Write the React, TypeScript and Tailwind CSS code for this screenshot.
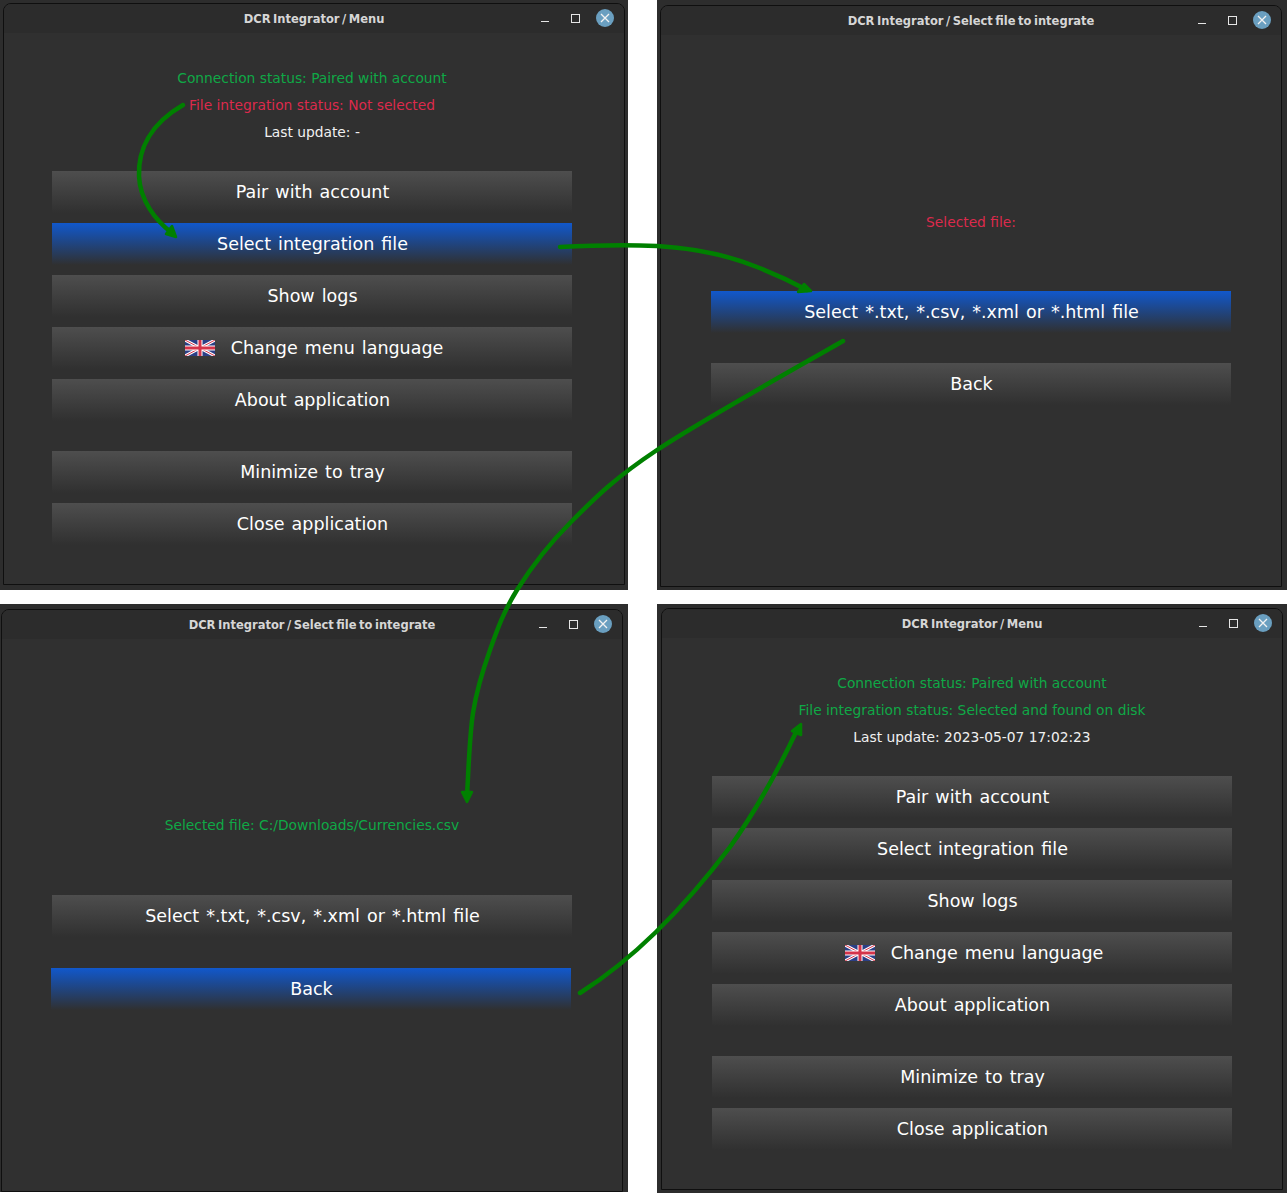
import type { ReactNode } from 'react'

const font = { fontFamily: '"DejaVu Sans", sans-serif' }

function Flag() {
  return (
    <svg width="30" height="16" viewBox="0 0 60 32" className="shrink-0">
      <rect width="60" height="32" fill="#2b3f86" />
      <path d="M0 0L60 32M60 0L0 32" stroke="#fff" strokeWidth="6" />
      <path d="M0 0L60 32M60 0L0 32" stroke="#d5344a" strokeWidth="2" />
      <path d="M30 0V32M0 16H60" stroke="#fff" strokeWidth="10" />
      <path d="M30 0V32M0 16H60" stroke="#d5344a" strokeWidth="6" />
    </svg>
  )
}

function MenuButton({ label, active, flag, extra }: { label: string; active?: boolean; flag?: boolean; extra?: string }) {
  return (
    <div
      className={`flex h-[42px] w-[520px] shrink-0 items-center justify-center gap-[16px] text-[17.5px] text-white [word-spacing:1.5px] ${
        flag ? 'pl-[4px]' : 'pl-[1px]'
      } ${active ? 'bg-linear-to-b/srgb from-[#1158cc] to-[#303030]' : 'bg-linear-to-b/srgb from-[#4e4e4e] to-[#303030]'} ${extra ?? ''}`}
    >
      {flag && <Flag />}
      <span>{label}</span>
    </div>
  )
}

function Window({
  title,
  outer,
  inner,
  children,
}: {
  title: string
  outer: string
  inner: string
  children: ReactNode
}) {
  return (
    <div className={`bg-[#2d2d2d] ${outer}`}>
      <div className={`flex flex-col overflow-hidden rounded-t-[8px] border border-[#0f0f0f] bg-[#303030] ${inner}`}>
        <div className="relative flex h-[29px] shrink-0 items-center justify-center bg-[#2c2c2c] pt-[2px]">
          <span className="text-[11.5px] font-bold text-[#d6d6d6] [word-spacing:-1.5px]">{title}</span>
          <div className="absolute right-[10px] top-[5px] flex items-center">
            <div className="mt-[6px] h-[1px] w-[8px] bg-[#e6e6e6]" />
            <div className="ml-[22px] h-[9px] w-[9px] border border-[#e6e6e6]" />
            <div className="ml-[16px] flex h-[18px] w-[18px] items-center justify-center rounded-full bg-[#6a9fc0]">
              <svg width="10" height="10" viewBox="0 0 10 10">
                <path d="M1 1L9 9M9 1L1 9" stroke="#f2f2f2" strokeWidth="1.3" />
              </svg>
            </div>
          </div>
        </div>
        {children}
      </div>
    </div>
  )
}

function StatusLine({ text, color }: { text: string; color: string }) {
  return <div className={`h-[27px] w-[520px] text-center text-[13.8px] leading-[27px] ${color}`}>{text}</div>
}

function MenuBody({
  fileStatus,
  fileColor,
  lastUpdate,
  selected,
  pad,
}: {
  fileStatus: string
  fileColor: string
  lastUpdate: string
  selected?: boolean
  pad: string
}) {
  return (
    <div className={`flex flex-col pt-[32px] ${pad}`}>
      <StatusLine text="Connection status: Paired with account" color="text-[#0fa846]" />
      <StatusLine text={fileStatus} color={fileColor} />
      <StatusLine text={lastUpdate} color="text-[#f0f0f0]" />
      <div className="mt-[25px] flex flex-col gap-[10px]">
        <MenuButton label="Pair with account" />
        <MenuButton label="Select integration file" active={selected} />
        <MenuButton label="Show logs" />
        <MenuButton label="Change menu language" flag />
        <MenuButton label="About application" />
        <MenuButton label="Minimize to tray" extra="mt-[20px]" />
        <MenuButton label="Close application" />
      </div>
    </div>
  )
}

function Arrows() {
  const green = '#008000'
  return (
    <svg className="pointer-events-none absolute left-0 top-0" width="1287" height="1193" fill="none">
      <g stroke={green} strokeWidth="4.5" strokeLinecap="round">
        <path d="M183 105C150 124 138 150 139 176C140 200 155 220 172 233" />
        <path d="M560 247C600 245 630 245 657 246C690 248 725 254 757 267C775 274 792 282 807 290" />
        <path d="M843 341C812 359 702.5 419.7 657 450C611.5 480.3 593.3 499.7 570 523C546.7 546.3 530.3 568.8 517 590C503.7 611.2 497.3 629.5 490 650C482.7 670.5 476.8 688.5 473 713C469.2 737.5 468 783 467 795" />
        <path d="M580 993C640 955 690 900 730 847C760 805 782 762 798 728" />
      </g>
      <g fill={green} stroke={green} strokeWidth="2.5" strokeLinejoin="round">
        <path d="M176 237L166 234L172 226Z" />
        <path d="M811 291L798 292L804 284Z" />
        <path d="M467 802L462 792L472 792Z" />
        <path d="M801 724L801 735L792 731Z" />
      </g>
    </svg>
  )
}

export default function App() {
  return (
    <div className="relative flex h-[1193px] w-[1287px] flex-col justify-between overflow-hidden bg-white" style={font}>
      <div className="flex justify-between">
        <Window title="DCR Integrator / Menu" outer="h-[590px] w-[628px] pl-[3px] pt-[3px]" inner="h-[582px] w-[622px]">
          <MenuBody
            pad="pl-[48px]"
            fileStatus="File integration status: Not selected"
            fileColor="text-[#dc2a4c]"
            lastUpdate="Last update: -"
            selected
          />
        </Window>
        <Window
          title="DCR Integrator / Select file to integrate"
          outer="h-[590px] w-[630px] pl-[3px] pt-[5px]"
          inner="h-[582px] w-[622px]"
        >
          <div className="flex flex-col pl-[50px] pt-[174px]">
            <div className="h-[27px] w-[520px] text-center text-[13.8px] leading-[27px] text-[#dc2a4c]">Selected file:</div>
            <MenuButton label="Select *.txt, *.csv, *.xml or *.html file" active extra="mt-[55px]" />
            <MenuButton label="Back" extra="mt-[30px]" />
          </div>
        </Window>
      </div>
      <div className="flex justify-between">
        <Window
          title="DCR Integrator / Select file to integrate"
          outer="h-[588px] w-[628px] pl-[1px] pt-[5px]"
          inner="h-[583px] w-[622px]"
        >
          <div className="flex flex-col pl-[50px] pt-[173px]">
            <div className="h-[27px] w-[520px] text-center text-[13.8px] leading-[27px] text-[#0fa846]">
              Selected file: C:/Downloads/Currencies.csv
            </div>
            <MenuButton label="Select *.txt, *.csv, *.xml or *.html file" extra="mt-[56px]" />
            <MenuButton label="Back" active extra="mt-[31px] -ml-[1px]" />
          </div>
        </Window>
        <Window title="DCR Integrator / Menu" outer="h-[589px] w-[630px] pl-[4px] pt-[4px]" inner="h-[582px] w-[622px]">
          <MenuBody
            pad="pl-[50px]"
            fileStatus="File integration status: Selected and found on disk"
            fileColor="text-[#0fa846]"
            lastUpdate="Last update: 2023-05-07 17:02:23"
          />
        </Window>
      </div>
      <Arrows />
    </div>
  )
}
